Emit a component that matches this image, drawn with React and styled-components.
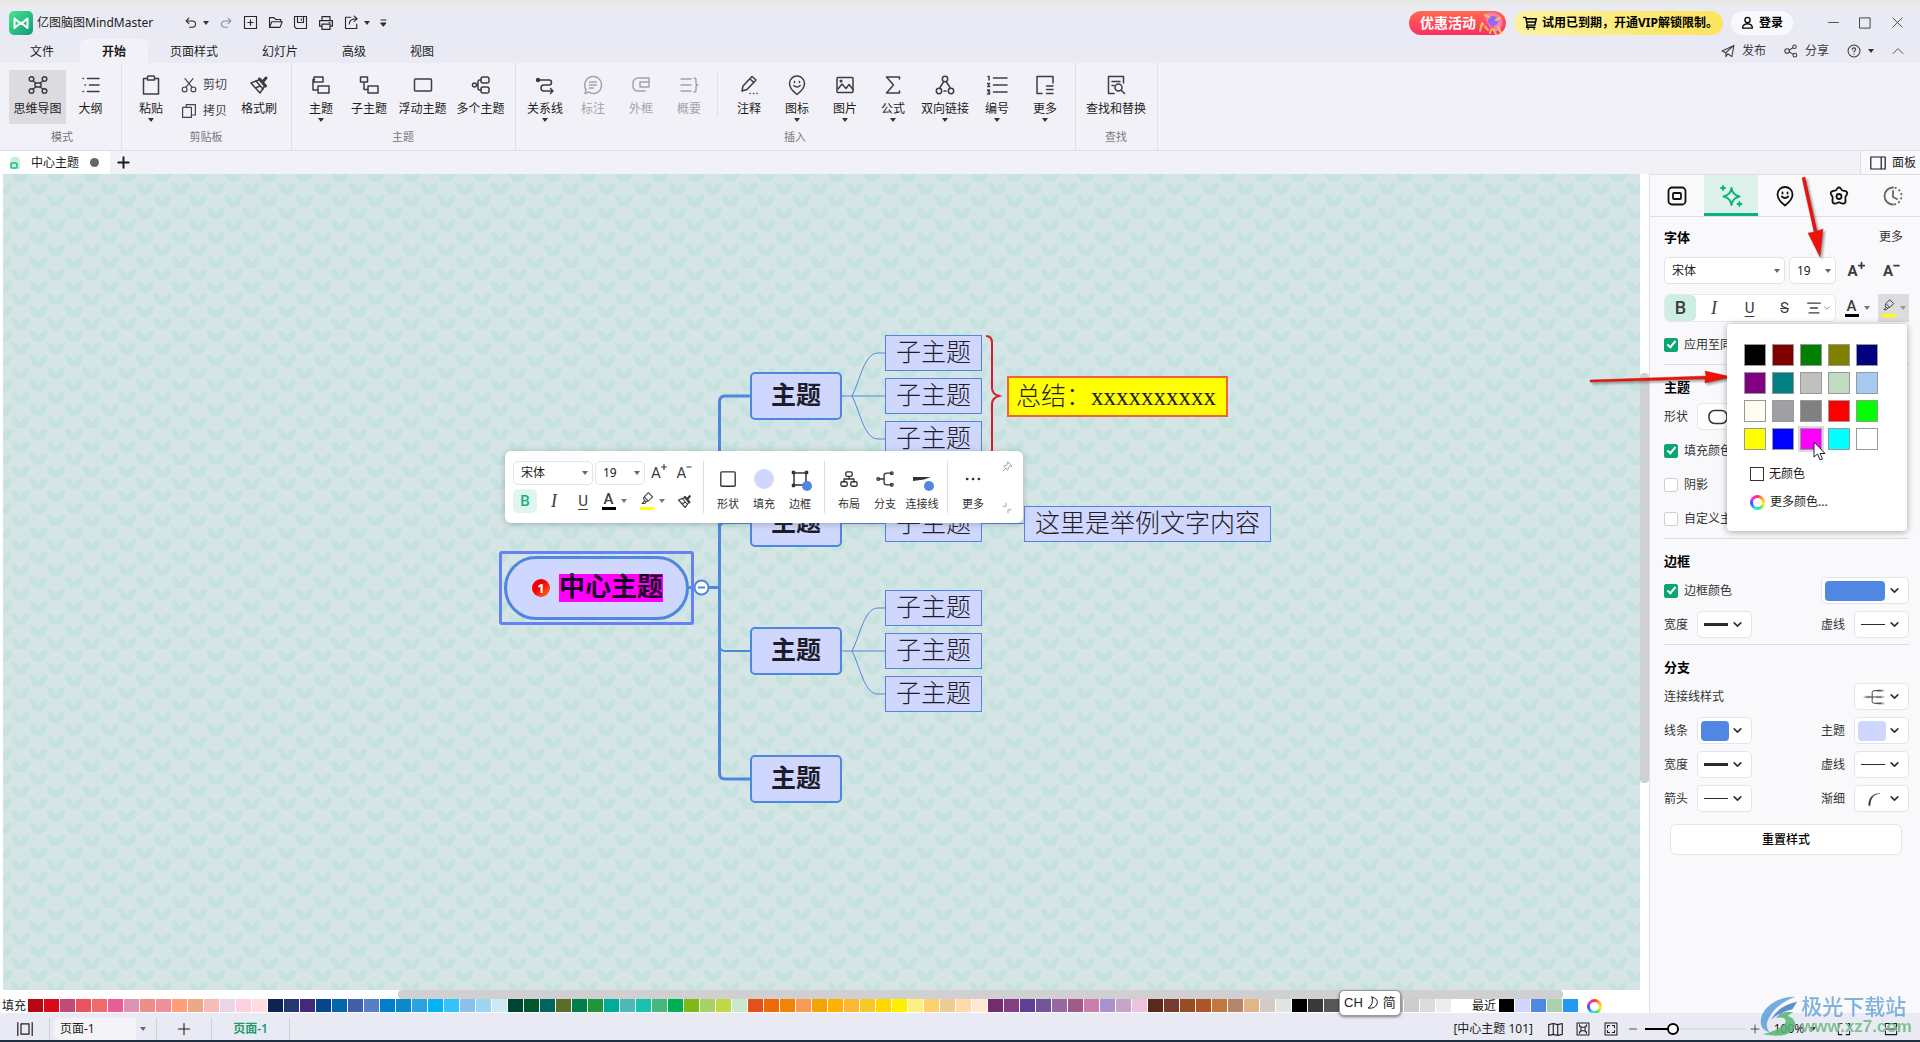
import { useState } from 'react';
import styled, { createGlobalStyle, css } from 'styled-components';

const GlobalStyle = createGlobalStyle`
	*, *::before, *::after { box-sizing: border-box; }
	html, body, #root { height: 100%; }
	body {
		margin: 0;
		overflow: hidden;
		color: #1c1c20;
		font: 12px/16px "Noto Sans", "Noto Sans CJK SC", sans-serif;
	}
	button, select, input {
		margin: 0;
		padding: 0;
		border: 0;
		background: none;
		color: inherit;
		font: inherit;
	}
`;

/* ---------- icons ---------- */

const Svg = styled.svg`
	display: block;
	flex: none;
	overflow: visible;
	fill: none;
	stroke: currentColor;
	stroke-width: ${({ $stroke }) => $stroke || 1.5};
	stroke-linecap: round;
	stroke-linejoin: round;
`;

const SHAPES = {
	undo: <path d="M7 3 3 7l4 4M3.500 7H12a4.500 4.500 0 0 1 0 9H8" />,
	redo: <path d="m13 3 4 4-4 4M16.500 7H8a4.500 4.500 0 0 0 0 9h4" />,
	newFile: <path d="M2 2h16v16H2zM10 6.500v7M6.500 10h7" />,
	open: <path d="M2 16V3.500h6l2 2.500h7v3M2 16.500 5 9h14l-3 7.500z" />,
	save: <path d="M2 2h16v16H4.500L2 15.500zM6 2v8h8V2M11 5v2" />,
	print: <path d="M5 7V2h10v5M5 14H2V7h16v7h-3M5 11.500h10V18H5zM14 9.500h1" />,
	exportFile: <path d="M9 3H2v15h15v-6M7 12c0-4 2-7 10-7M13.500 1.500 17.500 5l-4 3.500" />,
	mindmap: (
		<>
			<circle cx="3.500" cy="4" r="2.300" />
			<circle cx="16.500" cy="4" r="2.300" />
			<circle cx="3.500" cy="16" r="2.300" />
			<circle cx="16.500" cy="16" r="2.300" />
			<rect x="7" y="8" width="6" height="4" rx="1" />
			<path d="m5 6 3 2M15 6l-3 2M5 14l3-2M15 14l-3-2" />
		</>
	),
	outline: <path d="M6.500 3.500H18M8.500 10H18M6.500 16.500H18M2 3.500h.5M4 10h.5M2 16.500h.5" />,
	paste: <path d="M6.500 3.500H2.500V19h15V3.500h-4M6.500 2a1 1 0 0 1 1-1h5a1 1 0 0 1 1 1v3h-7z" />,
	cut: (
		<>
			<circle cx="4.500" cy="15.500" r="3" />
			<circle cx="15.500" cy="15.500" r="3" />
			<path d="M5 2l9 11M15 2 6 13" />
		</>
	),
	copy: <path d="M2 5.500h11V18H2zM6.500 5V2H18v13h-4.500" />,
	brush: (
		<>
			<path d="m2 8 9-3.500 5 6L11 18z" />
			<path d="m10.500 4 6 7M13.500 7 17 3" strokeWidth="3" />
			<path d="m7 6 7 8M7.500 12.500 11 11" />
		</>
	),
	topic: <path d="M3 3h9v5H3zM7 12h11v7H7zM3.500 5.500H2V16h5" transform="translate(0 -1)" />,
	subtopic: <path d="M1.500 2h7v5h-7zM9 11h10v7H9zM5 7v7.500h4" />,
	rect: <rect x="1.500" y="4" width="17" height="12" rx="1" />,
	multi: (
		<>
			<rect x="10" y="2" width="8" height="6" rx="2" />
			<rect x="10" y="12" width="8" height="6" rx="2" />
			<circle cx="3.500" cy="10" r="2" />
			<path d="M5.500 10H7M10 5H8.500Q7 5 7 7v6q0 2 1.500 2H10" />
		</>
	),
	relation: (
		<>
			<path d="M3 5h11a2.500 2.500 0 0 1 0 5H9a2.500 2.500 0 0 0 0 6h8M15.500 13.500 18 16l-2.500 2.500" />
			<circle cx="3" cy="5" r="1.500" fill="currentColor" />
		</>
	),
	callout: (
		<path d="M10 1.500a8 8.500 0 1 1-4 15.500l-4 1.500 1-4A8 8.500 0 0 1 10 1.500M6.500 7h7M6.500 10h7M6.500 13h4" />
	),
	boundary: <path d="M11 16H6a5 5 0 0 1-4-5V8a5 5 0 0 1 5-5h11v8M9 7h9M9 7v5h9V7M11 16h3" />,
	summary: <path d="M2 4h10M2 10h10M2 16h10M15 3q2 0 2 2v3q0 2 2 2-2 0-2 2v3q0 2-2 2" />,
	note: <path d="m3 16 1-5L13 1.500l4 3.500-9 9.500zM11 4l4 3.500M11 18.500h.1M14.500 18.500h.1M18 18.500h.1" />,
	marker: (
		<>
			<path d="M10 19.500C6 16.500 2.500 13 2.500 8.500a7.500 7.500 0 0 1 15 0c0 4.500-3.500 8-7.500 11z" />
			<path d="M6.800 10.500q3.200 3 6.400 0M7.500 6.500v1M12.500 6.500v1" />
		</>
	),
	image: (
		<>
			<rect x="2" y="2.500" width="16" height="15" rx="1" />
			<path d="m3 14 4-5 4 4.500 3-4 4 5" />
			<circle cx="6" cy="6" r=".8" />
		</>
	),
	formula: <path d="M16.500 4V2H3.500l7 8-7 8h13v-2" />,
	link: (
		<>
			<circle cx="10" cy="4" r="2.700" />
			<circle cx="4" cy="16" r="2.700" />
			<circle cx="16" cy="16" r="2.700" />
			<path d="M8.500 7 5 12.500M11.500 7l3.500 5.500M9 16h2" />
		</>
	),
	numbering: (
		<path d="M6.500 3H20M6.500 10H20M6.500 17H20M1 1.500h1V5M.5 8.500h2L.8 11.500h2M.5 15h2l-1.300 1.800 1.300.2v2H.5" />
	),
	more: <path d="M7 18.500H2v-17h16V8M11.500 11H18M11.500 14.500H18M11.500 18.500H18" />,
	find: (
		<>
			<path d="M8 18.500H2.500v-17h15V8M6 6.500h8M6 10.500h2" />
			<circle cx="12.500" cy="12.500" r="3.500" />
			<path d="m15.500 15.500 3 3" />
		</>
	),
	cart: <path d="M1 2h3l2 11h11l2-9H4.500M6 13l-1 3h12M7 18.500h.5M15.500 18.500h.5M7 8.500h10" />,
	user: <path d="M10 2a4 4.200 0 1 1 0 8.400A4 4.200 0 0 1 10 2M2.500 18.500c0-5 4-6.500 7.500-6.500s7.500 1.500 7.500 6.500z" />,
	send: <path d="M18.500 2 1.500 10l5 2.500 12-10.500-3 16-6-4-2.500 4v-5.500" />,
	share: (
		<>
			<circle cx="4.500" cy="10" r="3.300" />
			<circle cx="15" cy="4" r="2.500" />
			<circle cx="15.500" cy="16" r="2.700" />
			<path d="m7.500 8.500 5-3M7.500 11.500l5.500 3" />
		</>
	),
	help: (
		<>
			<circle cx="10" cy="10" r="8.500" />
			<path d="M7.500 8q0-2.500 2.500-2.500t2.500 2.300Q12.500 9.500 10 10.500v1.300M10 14.500v.3" />
		</>
	),
	up: <path d="m2 14 8-8 8 8" />,
	down: <path d="m4 7 6 6 6-6" />,
	minimize: <path d="M1 10h18" />,
	maximize: <path d="M1.500 1.500h17v17h-17z" />,
	close: <path d="m1.500 1.500 17 17M18.500 1.500l-17 17" />,
	panel: <path d="M1 2.500h18v15H1zM14 2.500v15" />,
	plus: <path d="M10 2v16M2 10h16" />,
	minus: <path d="M3 10h14" />,
	topicTab: (
		<>
			<rect x="1.500" y="1.500" width="17" height="17" rx="3.500" />
			<rect x="6" y="7" width="8" height="6" rx="1" />
		</>
	),
	sparkle: (
		<path d="M10.500 2Q11.500 9 18.500 10.500 11.500 12 10.500 19 9.500 12 2.500 10.500 9.500 9 10.500 2M2 0v4M0 2h4M18.500 16v4M16.500 18h4" />
	),
	star: (
		<>
			<path d="M8.200 2.500Q10 .5 11.800 2.500q.8 2 2.200 2.200l2.500.5q2.500 1 1.500 3l-1.500 2.500q-.4 1.500 0 3 .5 3.500-2 4-1.500 0-4.500-1.500-3 1.500-4.500 1.500-2.500-.5-2-4 .4-1.500 0-3L2 8.200q-1-2 1.500-3L6 4.700Q7.400 4.500 8.200 2.500" />
			<circle cx="10" cy="10.500" r="2.500" />
		</>
	),
	clock: (
		<>
			<path d="M10 1.500a8.500 8.500 0 0 0 0 17M10 5v6l4 2" />
			<path d="M12.500 1.900a8.500 8.500 0 0 1-1 16.500" strokeDasharray=".3 4" strokeWidth="2" />
		</>
	),
	align: <path d="M1 3h18M5 10h10M3 17h14" />,
	highlighter: <path d="m5 10 1-3 6-6 6 6-5.500 5.500-4 1.500zM7 8l4 4M6 13l-3 3.500h4l1.500-2" />,
	square: <rect x="2" y="2" width="16" height="16" rx="1" />,
	border: (
		<>
			<path d="M4 4h12v12H4z" />
			<path d="M2.500 2.500h2v2h-2zM15.500 2.500h2v2h-2zM2.500 15.500h2v2h-2z" fill="currentColor" />
		</>
	),
	layout: (
		<>
			<rect x="6.500" y="2" width="7" height="5" rx="1.500" />
			<rect x="1" y="13" width="7" height="5" rx="1.500" />
			<rect x="12" y="13" width="7" height="5" rx="1.500" />
			<path d="M10 7v3M4.500 13v-3h11v3" />
		</>
	),
	branch: (
		<>
			<path d="M3 10h6M17 3.500h-5Q9 3.500 9 6v8q0 2.500 3 2.500h5" />
			<circle cx="2.500" cy="10" r="1.500" />
			<circle cx="17.500" cy="3.500" r="1.500" />
			<circle cx="17.500" cy="16.500" r="1.500" />
		</>
	),
	dots: <path d="M3.500 10h.1M10 10h.1M16.500 10h.1" strokeWidth="3" />,
	pin: <path d="m11 2 7 7-2 1-2-.5-3 3 .5 3-1.500 1-7-7 1.500-1.500 3 .5 3-3L10 3zM6.500 13.500 2 18" />,
	resize: <path d="M2 6.500h6V.5M12 19.500v-6h6" />,
	pages: <path d="M1 2v16M19 2v16M5 3.500h10v13H5z" />,
	book: <path d="M1 3.500 7 2l6 1.500L19 2v14.500L13 18l-6-1.500L1 18zM7 2v14.500M13 3.500V18" />,
	fitPage: <path d="M1.500 1.500h17v17h-17zM5 6h2M13 6h2M5 14h2M13 14h2M7 7.500h6v5H7zM5 4v2M15 4v2M5 14v2M15 14v2" />,
	fitScreen: <path d="M1.500 1.500h17v17h-17zM5 8V5h3M12 5h3v3M15 12v3h-3M8 15H5v-3" />,
	fullscreen: <path d="M2 7V2h5M13 2h5v5M18 13v5h-5M7 18H2v-5" />,
	collapse: <path d="M2 7V2h16v5M2 13v5h16v-5M2 10h16" />,
	oval: <rect x="1" y="3.500" width="18" height="13" rx="5.500" />,
	taper: <path d="M4.500 18C4.500 9 9 3 19 3 11 3.500 6.500 9 6.500 18z" fill="currentColor" strokeWidth=".4" />,
};

const Icon = ({ name, size = 14, stroke }) => (
	<Svg width={size} height={size} viewBox="0 0 20 20" $stroke={stroke} aria-hidden="true">
		{SHAPES[name]}
	</Svg>
);

const Caret = styled.span`
	flex: none;
	width: 0;
	height: 0;
	border: 3px solid transparent;
	border-top: 4px solid ${({ $color }) => $color || '#333'};
	border-bottom: 0;
`;

const ColorRing = styled.span`
	flex: none;
	width: 15px;
	height: 15px;
	border-radius: 50%;
	background:
		radial-gradient(circle, #fff 0 4px, transparent 5px),
		conic-gradient(#f33, #fa3, #fe3, #3e5, #3df, #35f, #e3f, #f33);
`;

/* ---------- window frame ---------- */

const Window = styled.div`
	display: flex;
	flex-direction: column;
	height: 100vh;
	padding-top: 6px;
	background: #e8e8e6;
`;

const Header = styled.header`
	flex: none;
	background: #eaeaf5;
`;

const TitleBar = styled.div`
	display: flex;
	align-items: center;
	height: 33px;
	padding: 0 7px 0 9px;
`;

const Title = styled.h1`
	margin: 0 31px 0 4px;
	font-size: 12px;
	font-weight: 400;
	line-height: 16px;
	white-space: nowrap;
`;

const QuickAccess = styled.div`
	display: flex;
	flex: 1;
	align-items: center;
	gap: 10px;
`;

const QuickButton = styled.button`
	display: flex;
	align-items: center;
	gap: 5px;
	color: ${({ $muted }) => ($muted ? '#8d8d99' : '#26262c')};
`;

const Promo = styled.button`
	display: flex;
	align-items: center;
	height: 24px;
	margin-right: 8px;
	padding: 0 2px 0 11px;
	border-radius: 12px;
	background: linear-gradient(#ff6a4d, #fb2f63);
	color: #fff;
	font-size: 14px;
	font-weight: 700;
`;

const Vip = styled.button`
	display: flex;
	align-items: center;
	gap: 5px;
	height: 24px;
	margin-right: 8px;
	padding: 0 5px 0 9px;
	border-radius: 12px;
	background: linear-gradient(90deg, #fdf3a0, #fce45c);
	color: #000;
	font-weight: 700;
	white-space: nowrap;
`;

const Login = styled.button`
	display: flex;
	align-items: center;
	gap: 5px;
	height: 24px;
	margin-right: 24px;
	padding: 0 10px;
	border-radius: 12px;
	background: #f8f8fd;
	color: #000;
	font-weight: 700;
`;

const WindowButton = styled.button`
	display: flex;
	justify-content: center;
	width: 32px;
	color: #33333a;
`;

const MenuBar = styled.nav`
	display: flex;
	align-items: center;
	height: 24px;
	padding: 0 16px 0 8px;
`;

const MenuTab = styled.button`
	height: 24px;
	padding: 2px 22px 0;
	border-radius: 6px 6px 0 0;

	${({ $active }) =>
		$active &&
		css`
			margin-left: 4px;
			background: #f2f1f8;
			font-weight: 700;
		`}
`;

const MenuSpace = styled.span`
	flex: 1;
`;

const MenuAction = styled.button`
	display: flex;
	align-items: center;
	gap: 7px;
	margin-left: 18px;
	color: #3b3b42;
`;

/* ---------- ribbon ---------- */

const Ribbon = styled.div`
	display: flex;
	height: 88px;
	border-bottom: 1px solid #dedee6;
	background: #f2f1f8;
`;

const Group = styled.section`
	display: flex;
	flex-direction: column;
	padding: 7px 6px 0 ${({ $left }) => $left || 6}px;
	border-right: 1px solid #dfdfe7;
`;

const GroupBody = styled.div`
	display: flex;
	height: 54px;
`;

const GroupTitle = styled.div`
	margin-top: 5px;
	color: #77777e;
	font-size: 11px;
	text-align: center;
`;

const RibbonButton = styled.button`
	display: flex;
	flex-direction: column;
	align-items: center;
	justify-content: flex-start;
	width: ${({ $width }) => $width || 48}px;
	height: 54px;
	padding-top: 5px;
	background: ${({ $active }) => ($active ? '#dcdbe0' : 'none')};
	color: ${({ $muted }) => ($muted ? '#a3a3aa' : '#3c3c42')};
	white-space: nowrap;
`;

const RibbonLabel = styled.span`
	margin: 6px 0 1px;
	color: ${({ $muted }) => ($muted ? '#a3a3aa' : '#1c1c20')};
`;

const ClipStack = styled.div`
	display: flex;
	flex-direction: column;
	gap: 10px;
	width: 58px;
	padding: 7px 0 0 6px;
`;

const ClipButton = styled.button`
	display: flex;
	align-items: center;
	gap: 6px;
	height: 16px;
	color: #44444b;
`;

const ShortRule = styled.span`
	width: 1px;
	height: 44px;
	margin: 2px 7px 0 4px;
	background: #dfdfe7;
`;

const DocBar = styled.div`
	display: flex;
	flex: none;
	height: 23px;
	background: #f2f1f8;
`;

const DocTab = styled.button`
	display: flex;
	align-items: center;
	gap: 11px;
	padding: 0 11px 0 10px;
	background: #fff;
`;

const Unsaved = styled.span`
	width: 9px;
	height: 9px;
	border-radius: 50%;
	background: #666;
`;

const NewTab = styled.button`
	display: flex;
	align-items: center;
	flex: 1;
	padding-left: 7px;
`;

const PanelToggle = styled.button`
	display: flex;
	align-items: center;
	gap: 6px;
	width: 60px;
	padding-left: 9px;
	border-left: 1px solid #dedee6;
	background: #f9f9fc;
`;

/* ---------- work area ---------- */

const Work = styled.main`
	display: flex;
	flex: 1;
	min-height: 0;
`;

const Left = styled.div`
	display: flex;
	flex: 1;
	flex-direction: column;
	min-width: 0;
	background: #fff;
`;

const CanvasRow = styled.div`
	display: flex;
	flex: 1;
	min-height: 0;
	padding-left: 3px;
`;

const Canvas = styled.div`
	position: relative;
	flex: 1;
	overflow: hidden;
	background: #d5e5e6;
`;

const Backdrop = styled.svg`
	position: absolute;
	inset: 0;
	width: 100%;
	height: 100%;
`;

const Node = styled.div`
	position: absolute;
	left: ${({ $x }) => $x}px;
	top: ${({ $y }) => $y}px;
	display: flex;
	align-items: center;
	justify-content: center;
	color: #1d1d28;
	font-family: "Liberation Serif", "Noto Sans CJK SC", serif;
	font-size: 25px;
	line-height: 28px;
	white-space: nowrap;
`;

const MainTopic = styled(Node)`
	width: 92px;
	height: 48px;
	border: 2px solid #4f87de;
	border-radius: 5px;
	background: #d0d7fe;
	font-weight: 600;
`;

const SubTopic = styled(Node)`
	height: 36px;
	padding: 0 10px;
	border: 1px solid #4f87de;
	background: #d0d7fe;
	font-weight: 300;
`;

const SummaryTopic = styled(Node)`
	height: 41px;
	padding: 0 10px 0 7px;
	border: 2px solid #f0643c;
	background: #ff0;
	font-weight: 300;
`;

const Selection = styled(Node)`
	padding: 2px;
	border: 3px solid #6780f2;
	border-radius: 3px;
`;

const CentralTopic = styled.div`
	display: flex;
	align-items: center;
	gap: 9px;
	width: 185px;
	height: 64px;
	padding-left: 25px;
	border: 3px solid #4f87de;
	border-radius: 32px;
	background: #d0d7fe;
	color: #1a0020;
	font-size: 26px;
	font-weight: 600;

	mark {
		background: #f0f;
		color: inherit;
	}
`;

const Priority = styled.span`
	width: 18px;
	height: 18px;
	border-radius: 50%;
	background: linear-gradient(135deg, #f00000 40%, #ff7a2a);
	color: #fff;
	font: 700 13px/18px "Noto Sans", sans-serif;
	text-align: center;
`;

const VerticalScroll = styled.div`
	display: flex;
	flex-direction: column;
	width: 9px;

	&::before { flex: 199; content: ''; }
	&::after { flex: 207; content: ''; }
`;

const HorizontalScroll = styled.div`
	display: flex;
	height: 9px;

	&::before { flex: 398; content: ''; }
	&::after { flex: 86; content: ''; }
`;

const Thumb = styled.span`
	flex: ${({ $size }) => $size};
	border-radius: 4px;
	background: #d0d0d2;
`;

const Palette = styled.div`
	display: flex;
	height: 14px;
	padding-left: 2px;
	line-height: 14px;
	white-space: nowrap;
`;

const PaletteLabel = styled.span`
	flex: none;
	width: ${({ $width }) => $width}px;
	padding-left: ${({ $indent }) => $indent || 0}px;
`;

const Chip = styled.button`
	flex: none;
	width: 15px;
	height: 13px;
	margin-right: 1px;
	background: ${({ $color }) => $color};
`;

/* ---------- floating toolbar ---------- */

const FloatBar = styled.div`
	position: absolute;
	left: 502px;
	top: 277px;
	display: flex;
	height: 72px;
	padding: 10px 8px;
	border-radius: 6px;
	background: #fff;
	box-shadow: 0 1px 6px rgba(60, 80, 90, 0.35);
`;

const FloatText = styled.div`
	width: 184px;
`;

const FloatLine = styled.div`
	display: flex;
	align-items: center;
	height: 24px;
	margin-bottom: 4px;
`;

const Rule = styled.span`
	width: 1px;
	margin: 0 6px;
	background: #dcdce2;
`;

const FloatTool = styled.button`
	display: flex;
	flex-direction: column;
	align-items: center;
	gap: 5px;
	width: ${({ $width }) => $width || 36}px;
	padding-top: 6px;
	color: #333;
	font-size: 11px;
	white-space: nowrap;
`;

const FloatIcon = styled.span`
	position: relative;
	display: flex;
	align-items: center;
	justify-content: center;
	width: 24px;
	height: 24px;
`;

const FillDot = styled.span`
	width: 20px;
	height: 20px;
	border-radius: 50%;
	background: #d0d7fe;
`;

const BlueDot = styled.span`
	position: absolute;
	right: 0;
	bottom: 0;
	width: 10px;
	height: 10px;
	border-radius: 50%;
	background: #4f87e2;
`;

const FloatEdge = styled.div`
	display: flex;
	flex-direction: column;
	justify-content: space-between;
	width: 23px;
	padding-left: 10px;
	color: #888;
`;

/* ---------- text formatting controls ---------- */

const SelectBox = styled.label`
	position: relative;
	display: flex;
	width: ${({ $width }) => $width}px;
	height: ${({ $height }) => $height}px;
	margin-right: ${({ $gap }) => $gap}px;

	select {
		flex: 1;
		min-width: 0;
		padding: 0 16px 0 7px;
		border: 1px solid #e2e2ea;
		border-radius: 5px;
		background: #fff;
		appearance: none;
	}

	${Caret} {
		position: absolute;
		right: 5px;
		top: calc(50% - 2px);
		pointer-events: none;
	}
`;

const Picker = ({ label, value, width, height, gap = 0 }) => (
	<SelectBox $width={width} $height={height} $gap={gap}>
		<select aria-label={label} defaultValue={value}>
			<option>{value}</option>
		</select>
		<Caret $color="#666" />
	</SelectBox>
);

const FormatButton = styled.button`
	display: flex;
	align-items: center;
	justify-content: center;
	gap: ${({ $gap }) => $gap || 0}px;
	width: ${({ $width }) => $width}px;
	height: 100%;
	border-radius: ${({ $round }) => ($round ? 5 : 0)}px;
	background: ${({ $bg }) => $bg || 'none'};
	color: ${({ $color }) => $color || '#3c3c40'};
	font-size: 15px;
	line-height: 18px;

	b { font-family: Roboto, sans-serif; font-size: ${({ $big }) => ($big ? 18 : 15)}px; font-weight: 500; }
	i { font-family: "Liberation Serif", serif; font-size: 18px; }
	u, s { font-family: Roboto, sans-serif; text-underline-offset: 3px; }
`;

const Letter = styled.span`
	width: 14px;
	height: 18px;
	border-bottom: 3px solid ${({ $bar }) => $bar};
	font-family: Roboto, sans-serif;
	font-weight: 500;
	line-height: 15px;
	text-align: center;
`;

const PenMark = styled(Letter)`
	display: flex;
	justify-content: center;
`;

const SizeMark = styled.span`
	display: flex;
	font-family: Roboto, sans-serif;
	font-weight: ${({ $bold }) => ($bold ? 700 : 400)};
`;

/* ---------- side panel ---------- */

const Side = styled.aside`
	flex: none;
	width: 271px;
	border-top: 1px solid #dedee6;
	border-left: 1px solid #dedee6;
	background: #f9f9fc;
`;

const SideTabs = styled.div`
	display: flex;
	height: 42px;
	border-bottom: 1px solid #dedee6;
`;

const SideTab = styled.button`
	display: flex;
	flex: 1;
	align-items: center;
	justify-content: center;
	background: ${({ $active }) => ($active ? '#dcf1ea' : 'none')};
	box-shadow: inset 0 -3px 0 ${({ $active }) => ($active ? '#0cb07c' : 'transparent')};
	color: ${({ $active, $muted }) => ($active ? '#0cb07c' : $muted ? '#666' : '#111')};
`;

const SideBody = styled.div`
	padding: 10px 11px 0 14px;
`;

const Heading = styled.div`
	display: flex;
	align-items: center;
	justify-content: space-between;
	height: 20px;
	margin-bottom: 6px;

	h2 {
		margin: 0;
		color: #000;
		font-size: 13px;
		line-height: 20px;
	}
`;

const MoreLink = styled.a`
	margin-right: 6px;
	color: #333;
	text-decoration: none;
`;

const FontRow = styled.div`
	display: flex;
	height: 27px;
	margin: 10px 0;
`;

const StyleRow = styled.div`
	position: relative;
	display: flex;
	align-items: center;
	justify-content: space-between;
	height: 28px;
	margin-bottom: 9px;
`;

const StyleGroup = styled.div`
	display: flex;
	width: 172px;
	height: 28px;
	border: 1px solid #e6e6ec;
	border-radius: 6px;
	background: #fff;
`;

const Divider = styled.hr`
	height: 1px;
	margin: 6px 0 12px;
	border: 0;
	background: #dcdce2;
`;

const Row = styled.div`
	display: flex;
	align-items: center;
	justify-content: space-between;
	height: 27px;
	margin-bottom: ${({ $last }) => ($last ? 0 : 7)}px;
	color: #333;
`;

const Field = styled.span`
	display: flex;
	align-items: center;
	gap: 9px;
`;

const CheckLabel = styled.label`
	display: flex;
	align-items: center;
	gap: 6px;
	white-space: nowrap;

	input {
		display: flex;
		justify-content: center;
		width: 14px;
		height: 14px;
		border: 1px solid #cfcfd6;
		border-radius: 2px;
		background: #fff;
		appearance: none;
	}

	input:checked {
		border-color: #0aa573;
		background: #0aa573;
	}

	input:checked::after {
		width: 5px;
		height: 9px;
		border: solid #fff;
		border-width: 0 2px 2px 0;
		content: '';
		transform: rotate(40deg);
	}
`;

const DropButton = styled.button`
	display: flex;
	align-items: center;
	justify-content: space-between;
	width: ${({ $width }) => $width || 55}px;
	height: 27px;
	padding: 0 8px 0 ${({ $left }) => $left || 6}px;
	border: 1px solid #e4e4ea;
	border-radius: 5px;
	background: #fff;
	color: #333;
`;

const Swatch = styled.span`
	width: ${({ $width }) => $width || 28}px;
	height: 20px;
	border-radius: 4px;
	background: ${({ $color }) => $color};
`;

const Stroke = styled.span`
	width: 24px;
	height: ${({ $height }) => $height}px;
	background: #2b2b2b;
`;

const Reset = styled.button`
	display: block;
	width: 232px;
	height: 31px;
	margin: 12px 0 0 6px;
	border: 1px solid #e4e4ea;
	border-radius: 6px;
	background: #fff;
	color: #000;
	font-weight: 500;
`;

const Popup = styled.div`
	position: absolute;
	z-index: 2;
	top: 30px;
	right: 2px;
	width: 180px;
	height: 207px;
	padding: 20px 17px;
	border-radius: 4px;
	background: #fff;
	box-shadow: 0 1px 7px rgba(0, 0, 0, 0.35);
`;

const PopupGrid = styled.div`
	display: grid;
	grid-template-columns: repeat(5, 22px);
	gap: 6px;
	margin-bottom: 14px;
`;

const PopupColor = styled.button`
	height: 22px;
	border: 1px solid #999;
	background: ${({ $color }) => $color};
	box-shadow: ${({ $hover }) => ($hover ? '0 0 0 2px #d9d9de' : 'none')};
`;

const PopupAction = styled.button`
	display: flex;
	align-items: center;
	gap: 5px;
	height: 20px;
	margin: 0 0 8px 6px;
`;

const NoColor = styled.span`
	width: 14px;
	height: 14px;
	border: 1px solid #333;
`;

const Cursor = styled.svg`
	position: absolute;
	left: 86px;
	top: 117px;
`;

/* ---------- status bar ---------- */

const Status = styled.footer`
	display: flex;
	flex: none;
	align-items: center;
	height: 29px;
	padding-top: 5px;
	border-bottom: 2px solid #1f2e40;
	background: #eaeaf5;
`;

const StatusCell = styled.div`
	display: flex;
	align-items: center;
	justify-content: center;
	width: ${({ $width }) => $width}px;
	height: 22px;
	border-right: 1px solid #cfcfd8;
`;

const PageSelect = styled(SelectBox)`
	select {
		padding-left: 6px;
		border: 0;
		background: linear-gradient(90deg, #f4f3f8 82px, transparent 82px);
	}

	${Caret} { right: 6px; }
`;

const PageTab = styled.button`
	color: #1c9c6c;
	font-weight: 600;
`;

const StatusInfo = styled.span`
	flex: 1;
	padding-right: 12px;
	text-align: right;
	white-space: nowrap;
`;

const StatusButton = styled.button`
	display: flex;
	align-items: center;
	justify-content: center;
	gap: 6px;
	width: ${({ $width }) => $width}px;
	height: 22px;
`;

const Zoom = styled.input`
	width: 101px;
	height: 14px;
	appearance: none;

	&::-webkit-slider-runnable-track {
		height: 2px;
		background: linear-gradient(90deg, #000 25%, #dcdce4 25%);
	}

	&::-webkit-slider-thumb {
		width: 12px;
		height: 12px;
		margin-top: -5px;
		border: 2px solid #000;
		border-radius: 50%;
		background: #fff;
		appearance: none;
	}
`;

/* ---------- overlays ---------- */

const Ime = styled.div`
	position: absolute;
	left: 1339px;
	bottom: 26px;
	display: flex;
	align-items: center;
	gap: 4px;
	height: 26px;
	padding: 0 4px;
	border: 1px solid #999;
	border-radius: 5px;
	background: #fff;
	box-shadow: 0 1px 3px rgba(0, 0, 0, 0.5);
	font-family: "Liberation Sans", "Noto Sans CJK SC", sans-serif;
	font-size: 13px;
`;

const Watermark = styled.div`
	position: absolute;
	right: 8px;
	bottom: 4px;
	display: flex;
	align-items: center;
	opacity: 0.85;
	pointer-events: none;
	font: 500 21px/22px "Noto Sans CJK SC", sans-serif;

	strong {
		display: block;
		color: #6aa5d6;
		font-weight: 500;
	}

	span {
		display: block;
		color: #6dbb82;
		font: 700 17px/22px "Liberation Sans", sans-serif;
	}
`;

const Arrows = styled.svg`
	position: absolute;
	top: 170px;
	right: 0;
	pointer-events: none;
`;

const SIDE_TABS = [
	{ name: 'topicTab', label: '主题' },
	{ name: 'sparkle', label: '样式', active: true },
	{ name: 'marker', label: '图标' },
	{ name: 'star', label: '剪贴画' },
	{ name: 'clock', label: '历史', muted: true },
];

const POPUP_COLORS = [
	'#000000', '#800000', '#008000', '#808000', '#000080',
	'#800080', '#008080', '#c0c0c0', '#c0dcc0', '#a6caf0',
	'#fffbf0', '#a0a0a4', '#808080', '#ff0000', '#00ff00',
	'#ffff00', '#0000ff', '#ff00ff', '#00ffff', '#ffffff',
];

const PALETTE = `
b50812 d80a1c c04a78 e8535f ee6a6c e85c98 de92b4 ee8e88 f08f98 ff9e78 eaaa88 f6bcb8 ead4e6 ffd0e0 ffdce2
0f2350 233870 42297a 04478f 0268a8 4060ac 5580c6 0080cc 0a8acc 2aa4e0 04b4f2 32c4f8 8cc0ea 9ed6f2 cce9f4
024432 00582c 00655c 5a6e28 008048 1f963a 00ab9c 4ebab8 18c2ac 44b87e 00b050 80b818 a8d266 c0d844 cae8ce
e4501c ec6a06 f08406 f69a56 f4a402 ffb000 fcb834 f8c828 ffd800 fff000 fdf082 fdd06c eccc92 ffdaaa ffe8d0
752c6c 823e80 604094 745498 9a68a0 a05a88 ce7eae aa92ce c8a4c8 eec2da
5c281c 743c2c 984c24 ae5428 c0783c b4866a e2b684 d4ccc4 dfe5df
000000 3a3838 575757 757575 8c8c8c a5a5a5 bababa cccccc dcdcdc ededed ffffff`
	.trim()
	.split(/\s+/)
	.map((hex) => `#${hex}`);

const RECENT = ['#000000', '#d0d7fe', '#4f87e2', '#aad0ae', '#2499f4'];

const MAIN_TOPICS = [198, 325, 453, 581];
const SUB_TOPICS = [161, 204, 247, 332, 416, 459, 502];

const RibbonItem = ({ icon, label, width, arrow, muted, active }) => (
	<RibbonButton $width={width} $muted={muted} $active={active}>
		<Icon name={icon} size={20} />
		<RibbonLabel $muted={muted}>{label}</RibbonLabel>
		{arrow && <Caret />}
	</RibbonButton>
);

const WindowHeader = () => (
	<Header>
		<TitleBar>
			<Svg width="24" height="24" viewBox="0 0 24 24" stroke="none">
				<defs>
					<linearGradient id="logo" x1="0" y1="0" x2="1" y2="1">
						<stop offset="0" stopColor="#4be58a" />
						<stop offset="1" stopColor="#109a78" />
					</linearGradient>
				</defs>
				<rect width="24" height="24" rx="5" fill="url(#logo)" stroke="none" />
				<path d="M5.500 17V7.500L12 13l6.500-5.500V17L12 11.500z" stroke="#fff" strokeWidth="2" />
			</Svg>
			<Title>亿图脑图MindMaster</Title>
			<QuickAccess>
				<QuickButton aria-label="撤销"><Icon name="undo" /><Caret /></QuickButton>
				<QuickButton aria-label="恢复" $muted><Icon name="redo" /></QuickButton>
				<QuickButton aria-label="新建"><Icon name="newFile" size={15} /></QuickButton>
				<QuickButton aria-label="打开"><Icon name="open" size={15} /></QuickButton>
				<QuickButton aria-label="保存"><Icon name="save" size={15} /></QuickButton>
				<QuickButton aria-label="打印"><Icon name="print" size={16} /></QuickButton>
				<QuickButton aria-label="导出"><Icon name="exportFile" size={15} /><Caret /></QuickButton>
				<QuickButton aria-label="自定义">
					<Svg width="7" height="8" viewBox="0 0 7 8" $stroke={1}>
						<path d="M1 1h5" />
						<path d="M1 4h5L3.500 7z" fill="currentColor" />
					</Svg>
				</QuickButton>
			</QuickAccess>
			<Promo>
				优惠活动
				<Svg width="28" height="24" viewBox="0 0 28 24" stroke="none">
					<path d="M8 3q9-4 16 2 4 6 1 12-3 5-8 3L11 12z" fill="#f77fb4" stroke="none" />
					<circle cx="17" cy="10" r="5" fill="#8f6af4" stroke="none" />
					<path d="m4 20 2-8 6 7M14 22l2-6 4 7M9 4l4 2M22 16l3 6M24 7l-4 2" stroke="#ffc257" strokeWidth="2" />
					<path d="m3 9 1 1M8 15l3-4M13 17l4-1" stroke="#ff4b8b" strokeWidth="2" />
				</Svg>
			</Promo>
			<Vip><Icon name="cart" size={14} stroke={2} />试用已到期，开通VIP解锁限制。</Vip>
			<Login><Icon name="user" size={13} stroke={2} />登录</Login>
			<WindowButton aria-label="最小化"><Icon name="minimize" size={11} /></WindowButton>
			<WindowButton aria-label="最大化"><Icon name="maximize" size={12} /></WindowButton>
			<WindowButton aria-label="关闭"><Icon name="close" size={11} /></WindowButton>
		</TitleBar>
		<MenuBar>
			<MenuTab>文件</MenuTab>
			<MenuTab $active>开始</MenuTab>
			<MenuTab>页面样式</MenuTab>
			<MenuTab>幻灯片</MenuTab>
			<MenuTab>高级</MenuTab>
			<MenuTab>视图</MenuTab>
			<MenuSpace />
			<MenuAction><Icon name="send" />发布</MenuAction>
			<MenuAction><Icon name="share" />分享</MenuAction>
			<MenuAction aria-label="帮助"><Icon name="help" /><Caret /></MenuAction>
			<MenuAction aria-label="收起功能区"><Icon name="up" size={12} /></MenuAction>
		</MenuBar>
	</Header>
);

const RibbonBar = () => (
	<Ribbon>
		<Group $left={9}>
			<GroupBody>
				<RibbonItem icon="mindmap" label="思维导图" width={57} active />
				<RibbonItem icon="outline" label="大纲" width={49} />
			</GroupBody>
			<GroupTitle>模式</GroupTitle>
		</Group>
		<Group $left={5}>
			<GroupBody>
				<RibbonItem icon="paste" label="粘贴" arrow />
				<ClipStack>
					<ClipButton><Icon name="cut" size={16} />剪切</ClipButton>
					<ClipButton><Icon name="copy" size={16} />拷贝</ClipButton>
				</ClipStack>
				<RibbonItem icon="brush" label="格式刷" width={52} />
			</GroupBody>
			<GroupTitle>剪贴板</GroupTitle>
		</Group>
		<Group $left={5}>
			<GroupBody>
				<RibbonItem icon="topic" label="主题" arrow />
				<RibbonItem icon="subtopic" label="子主题" />
				<RibbonItem icon="rect" label="浮动主题" width={59} />
				<RibbonItem icon="multi" label="多个主题" width={57} />
			</GroupBody>
			<GroupTitle>主题</GroupTitle>
		</Group>
		<Group $left={5}>
			<GroupBody>
				<RibbonItem icon="relation" label="关系线" arrow />
				<RibbonItem icon="callout" label="标注" muted />
				<RibbonItem icon="boundary" label="外框" muted />
				<RibbonItem icon="summary" label="概要" muted />
				<ShortRule />
				<RibbonItem icon="note" label="注释" />
				<RibbonItem icon="marker" label="图标" arrow />
				<RibbonItem icon="image" label="图片" arrow />
				<RibbonItem icon="formula" label="公式" arrow />
				<RibbonItem icon="link" label="双向链接" width={56} arrow />
				<RibbonItem icon="numbering" label="编号" arrow />
				<RibbonItem icon="more" label="更多" arrow />
			</GroupBody>
			<GroupTitle>插入</GroupTitle>
		</Group>
		<Group $left={5}>
			<GroupBody>
				<RibbonItem icon="find" label="查找和替换" width={70} />
			</GroupBody>
			<GroupTitle>查找</GroupTitle>
		</Group>
	</Ribbon>
);

const Documents = () => (
	<DocBar>
		<DocTab>
			<Svg width="10" height="12" viewBox="0 0 10 12">
				<path d="M2 0h6l2 3v9H0V4z" fill="#c6f0dc" stroke="none" />
				<rect x="1" y="6" width="6" height="5" rx="1" stroke="#1fbf7a" />
			</Svg>
			中心主题
			<Unsaved />
		</DocTab>
		<NewTab aria-label="新建文档"><Icon name="plus" size={13} stroke={3} /></NewTab>
		<PanelToggle><Icon name="panel" size={16} />面板</PanelToggle>
	</DocBar>
);

const FloatToolbar = () => (
	<FloatBar>
		<FloatText>
			<FloatLine>
				<Picker label="字体" value="宋体" width={80} height={24} gap={2} />
				<Picker label="字号" value="19" width={50} height={24} gap={1} />
				<FormatButton $width={26} aria-label="增大字号">
					<SizeMark>A<Icon name="plus" size={6} stroke={4} /></SizeMark>
				</FormatButton>
				<FormatButton $width={25} aria-label="减小字号">
					<SizeMark>A<Icon name="minus" size={6} stroke={4} /></SizeMark>
				</FormatButton>
			</FloatLine>
			<FloatLine>
				<FormatButton $width={24} $bg="#e0f5ed" $color="#14b07e" $round><b>B</b></FormatButton>
				<FormatButton $width={34}><i>I</i></FormatButton>
				<FormatButton $width={24}><u>U</u></FormatButton>
				<FormatButton $width={38} $gap={5} aria-label="字体颜色">
					<Letter $bar="#000">A</Letter><Caret $color="#777" />
				</FormatButton>
				<FormatButton $width={38} $gap={5} aria-label="突出显示">
					<PenMark $bar="#ff0"><Icon name="highlighter" size={14} /></PenMark><Caret $color="#777" />
				</FormatButton>
				<FormatButton $width={26} aria-label="格式刷"><Icon name="brush" size={15} /></FormatButton>
			</FloatLine>
		</FloatText>
		<Rule />
		<FloatTool><FloatIcon><Icon name="square" size={18} /></FloatIcon>形状</FloatTool>
		<FloatTool><FloatIcon><FillDot /></FloatIcon>填充</FloatTool>
		<FloatTool><FloatIcon><Icon name="border" size={20} /><BlueDot /></FloatIcon>边框</FloatTool>
		<Rule />
		<FloatTool><FloatIcon><Icon name="layout" size={18} /></FloatIcon>布局</FloatTool>
		<FloatTool><FloatIcon><Icon name="branch" size={18} /></FloatIcon>分支</FloatTool>
		<FloatTool $width={38}>
			<FloatIcon>
				<Svg width="18" height="4" viewBox="0 0 18 4">
					<path d="M0 0h18L11 2.500 0 4z" fill="currentColor" stroke="none" />
				</Svg>
				<BlueDot />
			</FloatIcon>
			连接线
		</FloatTool>
		<Rule />
		<FloatTool $width={38}><FloatIcon><Icon name="dots" size={18} /></FloatIcon>更多</FloatTool>
		<FloatEdge><Icon name="pin" size={11} /><Icon name="resize" size={10} /></FloatEdge>
	</FloatBar>
);

const MindMap = () => (
	<Canvas>
		<Backdrop>
			<defs>
				<path
					id="leaf"
					fill="#c5e2df"
					d="M-9-6C-4-6-1-3 0 1 1-3 4-6 9-6 9 0 6 6 1 6h-2C-6 6-9 0-9-6"
				/>
				<pattern id="leaves" width="35.500" height="24.600" patternUnits="userSpaceOnUse" x="-9" y="-4">
					<use href="#leaf" x="26.500" y="6.200" />
					<use href="#leaf" x="9" y="18.500" />
				</pattern>
			</defs>
			<rect width="100%" height="100%" fill="url(#leaves)" />
			<g fill="none" stroke="#4f87de">
				<path strokeWidth="3" d="M685 413.500h31.500M747 222h-25q-5.500 0-5.500 6v371q0 6 5.500 6h25" />
				<path strokeWidth="2" d="M716.500 355q0-6 6-6H747M716.500 471q0 6 6 6H747" />
				<path d="M839 222h43M849 222c8-15 12-43 26-43h7M849 222c8 15 12 43 26 43h7" />
				<path d="M839 349.500h182" />
				<path d="M839 477h43M849 477c8-15 12-43 26-43h7M849 477c8 15 12 43 26 43h7" />
			</g>
			<g stroke="#4f87de" strokeWidth="2" fill="#fff">
				<circle cx="698.500" cy="413.500" r="7" />
				<path d="M695 413.500h7" />
			</g>
			<path
				d="M983 162q6 0 6 7v45q0 6 7 8-7 2-7 8v46q0 7-6 7"
				fill="none"
				stroke="#d81e2c"
				strokeWidth="2"
			/>
		</Backdrop>
		{MAIN_TOPICS.map((y) => (
			<MainTopic key={y} $x={747} $y={y}>主题</MainTopic>
		))}
		{SUB_TOPICS.map((y) => (
			<SubTopic key={y} $x={882} $y={y}>子主题</SubTopic>
		))}
		<SubTopic $x={1021} $y={332}>这里是举例文字内容</SubTopic>
		<SummaryTopic $x={1004} $y={202}>总结：xxxxxxxxxx</SummaryTopic>
		<Selection $x={496} $y={377}>
			<CentralTopic>
				<Priority>1</Priority>
				<mark>中心主题</mark>
			</CentralTopic>
		</Selection>
		<FloatToolbar />
	</Canvas>
);

const ColorPopup = () => (
	<Popup>
		<PopupGrid>
			{POPUP_COLORS.map((color) => (
				<PopupColor key={color} $color={color} $hover={color === '#ff00ff'} aria-label={color} />
			))}
		</PopupGrid>
		<PopupAction><NoColor />无颜色</PopupAction>
		<PopupAction><ColorRing />更多颜色...</PopupAction>
		<Cursor width="13" height="20" viewBox="0 0 13 20">
			<path d="M1 1v15l3.500-3L7 19l2.500-1L7 12.500h5z" fill="#fff" stroke="#223" />
		</Cursor>
	</Popup>
);

const Check = ({ label, initial = false }) => {
	const [checked, setChecked] = useState(initial);
	return (
		<CheckLabel>
			<input type="checkbox" checked={checked} onChange={() => setChecked(!checked)} />
			{label}
		</CheckLabel>
	);
};

const Drop = ({ label, width, left, hideLabel, children }) => (
	<Field>
		{!hideLabel && label}
		<DropButton $width={width} $left={left} aria-label={label}>
			{children}
			<Icon name="down" size={11} stroke={3} />
		</DropButton>
	</Field>
);

const SidePanel = () => (
	<Side>
		<SideTabs>
			{SIDE_TABS.map(({ name, label, active, muted }) => (
				<SideTab key={name} $active={active} $muted={muted} aria-label={label}>
					<Icon name={name} size={20} stroke={1.800} />
				</SideTab>
			))}
		</SideTabs>
		<SideBody>
			<Heading>
				<h2>字体</h2>
				<MoreLink href="#more">更多</MoreLink>
			</Heading>
			<FontRow>
				<Picker label="字体" value="宋体" width={121} height={27} gap={4} />
				<Picker label="字号" value="19" width={47} height={27} gap={2} />
				<FormatButton $width={36} aria-label="增大字号">
					<SizeMark $bold>A<Icon name="plus" size={7} stroke={5} /></SizeMark>
				</FormatButton>
				<FormatButton $width={35} aria-label="减小字号">
					<SizeMark $bold>A<Icon name="minus" size={7} stroke={5} /></SizeMark>
				</FormatButton>
			</FontRow>
			<StyleRow>
				<StyleGroup>
					<FormatButton $width={31} $bg="#cdeee2" $round $big><b>B</b></FormatButton>
					<FormatButton $width={36}><i>I</i></FormatButton>
					<FormatButton $width={35}><u>U</u></FormatButton>
					<FormatButton $width={35}><s>S</s></FormatButton>
					<FormatButton $width={33} $gap={2} aria-label="对齐">
						<Icon name="align" size={14} stroke={2} />
						<Icon name="down" size={8} />
					</FormatButton>
				</StyleGroup>
				<FormatButton $width={30} $gap={5} aria-label="字体颜色">
					<Letter $bar="#000">A</Letter><Caret $color="#777" />
				</FormatButton>
				<FormatButton $width={31} $gap={4} $bg="#dcdcdf" aria-label="突出显示">
					<PenMark $bar="#ff0"><Icon name="highlighter" size={13} /></PenMark><Caret $color="#999" />
				</FormatButton>
				<ColorPopup />
			</StyleRow>
			<Row $last><Check label="应用至同级主题" initial /></Row>
			<Divider />
			<Heading><h2>主题</h2></Heading>
			<Row>
				<Drop label="形状" left={10}><Icon name="oval" size={20} /></Drop>
			</Row>
			<Row><Check label="填充颜色" initial /></Row>
			<Row><Check label="阴影" /></Row>
			<Row $last><Check label="自定义主题宽度" /></Row>
			<Divider />
			<Heading><h2>边框</h2></Heading>
			<Row>
				<Check label="边框颜色" initial />
				<Drop label="边框颜色" hideLabel width={88} left={3}><Swatch $width={60} $color="#4f87e2" /></Drop>
			</Row>
			<Row $last>
				<Drop label="宽度"><Stroke $height={3} /></Drop>
				<Drop label="虚线"><Stroke $height={1} /></Drop>
			</Row>
			<Divider />
			<Heading><h2>分支</h2></Heading>
			<Row>
				连接线样式
				<Drop label="连接线样式" hideLabel left={9}>
					<Svg width="20" height="18" viewBox="0 0 22 18" $stroke={1}>
						<path d="M1 9h5M15 2h6M15 9h6M15 16h6" stroke="#c4c4c4" strokeWidth="3" />
						<path d="M3 9h16M19 2h-7q-3 0-3 2v10q0 2 3 2h7" />
					</Svg>
				</Drop>
			</Row>
			<Row>
				<Drop label="线条" left={3}><Swatch $color="#4f87e2" /></Drop>
				<Drop label="主题" left={3}><Swatch $color="#d0d7fe" /></Drop>
			</Row>
			<Row>
				<Drop label="宽度"><Stroke $height={3} /></Drop>
				<Drop label="虚线"><Stroke $height={1} /></Drop>
			</Row>
			<Row $last>
				<Drop label="箭头"><Stroke $height={1} /></Drop>
				<Drop label="渐细" left={10}><Icon name="taper" size={16} /></Drop>
			</Row>
			<Reset>重置样式</Reset>
		</SideBody>
	</Side>
);

const ColorStrip = () => (
	<Palette>
		<PaletteLabel $width={26}>填充</PaletteLabel>
		{PALETTE.map((color, index) => (
			<Chip key={index} $color={color} aria-label={color} />
		))}
		<PaletteLabel $width={31} $indent={4}>最近</PaletteLabel>
		{RECENT.map((color) => (
			<Chip key={color} $color={color} aria-label={color} />
		))}
		<PaletteLabel $width={8} />
		<ColorRing />
	</Palette>
);

const StatusBar = () => {
	const [zoom, setZoom] = useState(25);
	return (
		<Status>
			<StatusCell $width={50}><Icon name="pages" size={16} /></StatusCell>
			<StatusCell $width={107}>
				<PageSelect $width={98} $height={22} $gap={0}>
					<select aria-label="页面" defaultValue="页面-1">
						<option>页面-1</option>
					</select>
					<Caret $color="#666" />
				</PageSelect>
			</StatusCell>
			<StatusCell $width={55}>
				<StatusButton $width={54} aria-label="添加页面"><Icon name="plus" size={14} /></StatusButton>
			</StatusCell>
			<StatusCell $width={78}><PageTab>页面-1</PageTab></StatusCell>
			<StatusInfo>[中心主题 101]</StatusInfo>
			<StatusButton $width={20} aria-label="浏览"><Icon name="book" size={15} /></StatusButton>
			<StatusButton $width={36} aria-label="适合页面"><Icon name="fitPage" /></StatusButton>
			<StatusButton $width={20} aria-label="适合屏幕"><Icon name="fitScreen" /></StatusButton>
			<StatusButton $width={24} aria-label="缩小"><Icon name="minus" size={10} /></StatusButton>
			<Zoom
				type="range"
				aria-label="缩放"
				value={zoom}
				onChange={({ target }) => setZoom(Number(target.value))}
			/>
			<StatusButton $width={18} aria-label="放大"><Icon name="plus" size={10} /></StatusButton>
			<StatusButton $width={62}>100%<Caret /></StatusButton>
			<StatusButton $width={36} aria-label="全屏"><Icon name="fullscreen" /></StatusButton>
			<StatusButton $width={58} aria-label="收起"><Icon name="collapse" /></StatusButton>
		</Status>
	);
};

const App = () => (
	<Window>
		<GlobalStyle />
		<WindowHeader />
		<RibbonBar />
		<Documents />
		<Work>
			<Left>
				<CanvasRow>
					<MindMap />
					<VerticalScroll><Thumb $size={410} /></VerticalScroll>
				</CanvasRow>
				<HorizontalScroll><Thumb $size={1165} /></HorizontalScroll>
				<ColorStrip />
			</Left>
			<SidePanel />
		</Work>
		<StatusBar />
		<Ime>
			CH
			<Svg width="12" height="14" viewBox="0 0 12 14" $stroke={1}>
				<path d="M5 1q7 2 5 7-2 5-9 4 6-3 4-11" />
			</Svg>
			简
		</Ime>
		<Watermark>
			<Svg width="44" height="44" viewBox="0 0 46 46">
				<path d="M40 3C20 2 2 17 4 31q1 7 9 9-5-6-1-14Q19 11 40 3" fill="#5aa0dc" stroke="none" />
				<path d="M38 19q-13-2-18 6 10-2 10 4-2 7-24 13 32 6 34-11-1-6-8-8 2-2 6-4" fill="#55b676" stroke="none" />
				<path d="M42 8Q22 12 15 27q8-8 22-11" fill="#3f7fc4" stroke="none" />
			</Svg>
			<div>
				<strong>极光下载站</strong>
				<span>www.xz7.com</span>
			</div>
		</Watermark>
		<Arrows width="340" height="220" viewBox="1580 170 340 220">
			<g fill="#ee1208" stroke="#b01410" strokeWidth=".4" filter="drop-shadow(2px 2px 1px rgba(0,0,0,.35))">
				<path d="m1802 178 3-1 12 54 6-2-3 28-12-24 6-1z" />
				<path d="m1590 380 116-4-1-5 27 6-27 6v-4l-115 3z" />
			</g>
		</Arrows>
	</Window>
);

export default App;
